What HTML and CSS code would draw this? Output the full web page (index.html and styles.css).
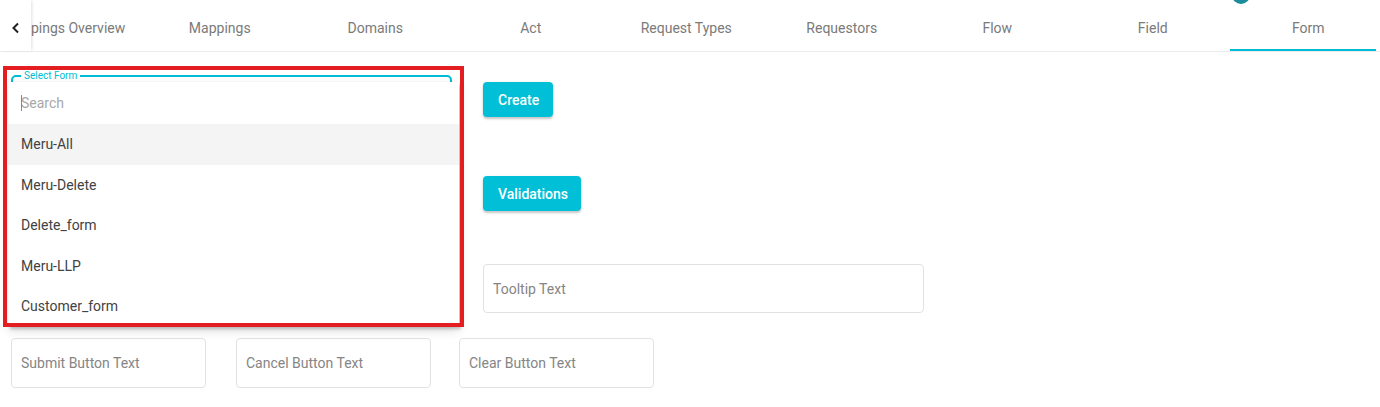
FILE: index.html
```html
<!DOCTYPE html>
<html>
<head>
<meta charset="utf-8">
<link rel="stylesheet" href="styles.css">
</head>
<body>
<div class="avatar-dot"></div>
<header class="tabbar">
  <button class="back" aria-label="Previous">
    <svg width="10" height="12" viewBox="0 0 10 12"><path d="M7 1.5 L2.5 6 L7 10.5" fill="none" stroke="#222" stroke-width="2"/></svg>
  </button>
  <div class="tabs-viewport">
    <div class="tabs">
      <div class="tab">Mappings Overview</div>
      <div class="tab">Mappings</div>
      <div class="tab">Domains</div>
      <div class="tab">Act</div>
      <div class="tab">Request Types</div>
      <div class="tab">Requestors</div>
      <div class="tab">Flow</div>
      <div class="tab">Field</div>
      <div class="tab active">Form<span class="ink"></span></div>
    </div>
  </div>
</header>

<main class="content">
  <div class="top-grid">
    <div class="highlight">
      <fieldset class="select-field">
        <legend>Select Form</legend>
      </fieldset>
      <div class="panel">
        <div class="search"><span class="caret"></span><span class="search-ph">Search</span></div>
        <div class="option selected">Meru-All</div>
        <div class="option">Meru-Delete</div>
        <div class="option">Delete_form</div>
        <div class="option">Meru-LLP</div>
        <div class="option">Customer_form</div>
      </div>
    </div>
    <div class="right-col">
      <button class="btn btn-create">Create</button>
      <button class="btn btn-validations">Validations</button>
      <div class="input wide">Tooltip Text</div>
    </div>
  </div>
  <div class="bottom-row">
    <div class="input small">Submit Button Text</div>
    <div class="input small">Cancel Button Text</div>
    <div class="input small">Clear Button Text</div>
  </div>
</main>
</body>
</html>
```
FILE: styles.css
```css
* { box-sizing: border-box; }
html, body { margin: 0; padding: 0; background: #fff; }
body {
  font-family: Roboto, "Liberation Sans", Arial, sans-serif;
  font-size: 14px;
  width: 1380px;
  height: 407px;
  overflow: hidden;
  position: relative;
}

.avatar-dot {
  position: absolute;
  left: 1232px;
  top: -14px;
  width: 18px;
  height: 18px;
  border-radius: 50%;
  background: #1b8c9b;
  z-index: 5;
}

.tabbar {
  display: flex;
  height: 52px;
  border-bottom: 1px solid #ececec;
}
.back {
  width: 31px;
  height: 51px;
  border: none;
  background: #fff;
  padding: 4px 0 0 0;
  display: flex;
  align-items: center;
  justify-content: center;
  box-shadow: 2px 0 3px -1px rgba(0,0,0,0.12);
  position: relative;
  z-index: 2;
}
.tabs-viewport {
  flex: 1;
  overflow: hidden;
  height: 51px;
}
.tabs {
  display: flex;
  margin-left: -44.5px;
  height: 51px;
}
.tab {
  flex: 0 0 155.5px;
  display: flex;
  align-items: center;
  justify-content: center;
  padding-top: 4px;
  color: #7a7a7a;
  font-size: 14px;
  white-space: nowrap;
  position: relative;
}
.tab.active .ink {
  position: absolute;
  left: -1px;
  bottom: 0;
  width: 146px;
  height: 2px;
  background: #00bcd4;
}

.content {
  padding: 14px 0 0 3px;
}
.top-grid {
  display: grid;
  grid-template-columns: 461px 441px;
  column-gap: 19px;
  align-items: start;
}

.highlight {
  position: relative;
  height: 261px;
  padding: 4px;
}
.highlight::after {
  content: "";
  position: absolute;
  inset: 0;
  border: 4px solid #e41e20;
  pointer-events: none;
  z-index: 3;
}
.select-field {
  margin: 0 8px 0 4px;
  height: 56px;
  border: 2px solid #00bcd4;
  border-radius: 5px;
  padding: 0 8px;
}
.select-field legend {
  font-size: 10px;
  color: #00bcd4;
  padding: 0 3px;
  line-height: 12px;
  margin-left: 0;
}
.panel {
  position: absolute;
  left: 5px;
  top: 16px;
  width: 451px;
  height: 245px;
  background: #fff;
  box-shadow: 2px 2px 3px rgba(0,0,0,0.22), 0 4px 10px rgba(0,0,0,0.12);
  overflow: hidden;
  z-index: 2;
}
.search {
  height: 42px;
  display: flex;
  align-items: center;
  padding-left: 13px;
  color: #a8a8a8;
  font-size: 14px;
}
.caret {
  width: 1px;
  height: 16px;
  background: #00bcd4;
  margin-right: -1px;
}
.option {
  height: 40.5px;
  display: flex;
  align-items: center;
  padding-left: 13px;
  color: #424242;
  font-size: 14px;
}
.option.selected { background: #f4f4f4; }

.right-col {
  display: flex;
  flex-direction: column;
  align-items: flex-start;
  padding-top: 16px;
}
.btn {
  height: 35px;
  border: none;
  border-radius: 4px;
  background: #00bfd6;
  color: #fff;
  font-family: Roboto, "Liberation Sans", Arial, sans-serif;
  font-size: 14px;
  font-weight: 500;
  padding: 0 15px;
  box-shadow: 0 2px 2px rgba(0,0,0,0.18), 0 1px 4px rgba(0,0,0,0.08);
}
.btn-create { width: 70px; }
.btn-validations { width: 98px; margin-top: 59px; }

.input {
  height: 50px;
  border: 1px solid #e2e2e2;
  border-radius: 4px;
  display: flex;
  align-items: center;
  padding-left: 9px;
  color: #858585;
  font-size: 14px;
}
.input.wide { width: 441px; height: 49px; margin-top: 53px; }

.bottom-row {
  display: grid;
  grid-template-columns: 225px 223px 195px;
  margin-top: 11px;
  padding-left: 8px;
}
.input.small { width: 195px; }
```
